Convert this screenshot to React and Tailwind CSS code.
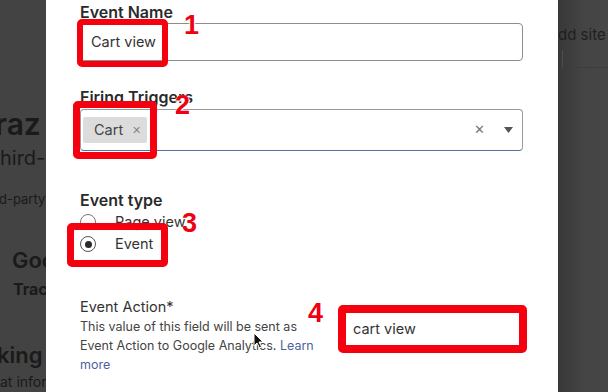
const Callout = ({ className }) => (
  <div className={`pointer-events-none absolute rounded-[5px] border-[#f4000e] ${className}`} />
);

const Num = ({ n, className }) => (
  <span
    className={`pointer-events-none absolute font-['Liberation_Sans',sans-serif] text-[27px] font-bold leading-none text-[#f00010] [text-shadow:0_0_1px_#fff,1px_1px_1px_#fff,-1px_1px_1px_#fff] ${className}`}
  >
    {n}
  </span>
);

const Radio = ({ checked, label }) => (
  <div className="flex h-[22px] items-center">
    <span className={`flex h-[16px] w-[16px] items-center justify-center rounded-full border ${checked ? 'border-[#555]' : 'border-[#777]'} bg-white`}>
      {checked && <span className="h-[7px] w-[7px] rounded-full bg-[#2b2b2b]" />}
    </span>
    <span className="ml-[19px] text-[14.5px] text-[#333]">{label}</span>
  </div>
);

export default function App() {
  return (
    <div className="relative flex h-[392px] w-[608px] overflow-hidden bg-white font-['Inter',sans-serif]">
      {/* page behind the overlay, left */}
      <div className="w-[46px] shrink-0 overflow-hidden whitespace-nowrap bg-[#434343] pt-[106px] text-[#1a1a1a]">
        <div className="-ml-[5px] text-[30px] font-semibold leading-[36px]">raz</div>
        <div className="mt-[4px] text-[20px] leading-[24px]">hird-party</div>
        <div className="mt-[21px] -ml-[1px] text-[13px] leading-[16px]">d-party</div>
        <div className="ml-[12px] mt-[40px] text-[22px] font-semibold leading-[26px]">Google</div>
        <div className="ml-[13px] mt-[6px] text-[16px] font-bold leading-[20px]">Tracking</div>
        <div className="-ml-[3px] mt-[43px] text-[22px] font-semibold leading-[26px]">king Events</div>
        <div className="mt-[5px] text-[14px] leading-[18px]">at information</div>
      </div>

      {/* modal */}
      <div className="w-[512px] shrink-0 bg-white pl-[34px] pr-[35px] pt-[2px] text-[#2a2a2a]">
        <div className="text-[16px] font-semibold leading-[20px]">Event Name</div>
        <div className="mt-[1px] flex h-[38px] items-center rounded-[4px] border border-[#8d8d8d] px-[10px] text-[14.5px] text-[#333]">
          Cart view
        </div>

        <div className="mt-[26px] text-[16px] font-semibold leading-[20px]">Firing Triggers</div>
        <div className="mt-[2px] flex h-[42px] items-center rounded-[4px] border border-[#9a9a9a] border-b-[#5670a0] pl-[2px] pr-[9px]">
          <span className="flex h-[26px] items-center rounded-[2px] bg-[#dcdcdc] pl-[11px] pr-[6px] text-[14.5px] text-[#444]">
            Cart
            <span className="ml-[9px] text-[11px] text-[#888]">✕</span>
          </span>
          <span className="ml-auto text-[13px] text-[#777]">✕</span>
          <svg className="ml-[19px]" width="9" height="6" viewBox="0 0 9 6">
            <path d="M0 0h9L4.5 6z" fill="#555" />
          </svg>
        </div>

        <div className="mt-[39px] text-[16px] font-semibold leading-[20px]">Event type</div>
        <div className="mt-[1px]">
          <Radio label="Page view" />
          <Radio checked label="Event" />
        </div>

        <div className="mt-[42px] flex">
          <div className="w-[242px] shrink-0">
            <div className="text-[14.5px] leading-[20px] text-[#333]">Event Action*</div>
            <p className="text-[12.5px] leading-[19px] text-[#444]">
              This value of this field will be sent as Event Action to Google Analytics.{' '}
              <span className="text-[#4f5f9c]">Learn more</span>
            </p>
          </div>
          <div className="ml-[22px] mt-[14px] flex h-[36px] flex-1 items-center rounded-[4px] border border-[#8d8d8d] px-[8px] text-[14.5px] text-[#333]">
            cart view
          </div>
        </div>
      </div>

      {/* page behind the overlay, right */}
      <div className="flex-1 overflow-hidden whitespace-nowrap bg-gradient-to-r from-[#383838] via-[#444] to-[#474747] pt-[25px] text-[#1f1f1f]">
        <div className="text-[15px] leading-[20px]">dd site</div>
        <div className="mt-[5px] flex">
          <span className="ml-[4px] h-[18px] w-px bg-[#4c4c4c]" />
          <span className="ml-[12px] h-[18px] flex-1 border-b border-[#3c3c3c]" />
        </div>
      </div>

      {/* annotations */}
      <Callout className="left-[77px] top-[19px] h-[48px] w-[91px] border-[6px]" />
      <Callout className="left-[73px] top-[101px] h-[58px] w-[84px] border-[7px]" />
      <Callout className="left-[67px] top-[223px] h-[44px] w-[101px] border-[7px]" />
      <Callout className="left-[338px] top-[305px] h-[48px] w-[189px] border-[8px]" />
      <Num n="1" className="left-[184px] top-[12px]" />
      <Num n="2" className="left-[175px] top-[92px]" />
      <Num n="3" className="left-[182px] top-[210px]" />
      <Num n="4" className="left-[308px] top-[300px]" />

      {/* mouse pointer */}
      <svg className="pointer-events-none absolute left-[253px] top-[332px]" width="11" height="17" viewBox="0 0 11 17">
        <path d="M1 1v13l3-3 2.5 5 2-1-2.5-5H10z" fill="#111" stroke="#fff" strokeWidth="1" />
      </svg>
    </div>
  );
}
